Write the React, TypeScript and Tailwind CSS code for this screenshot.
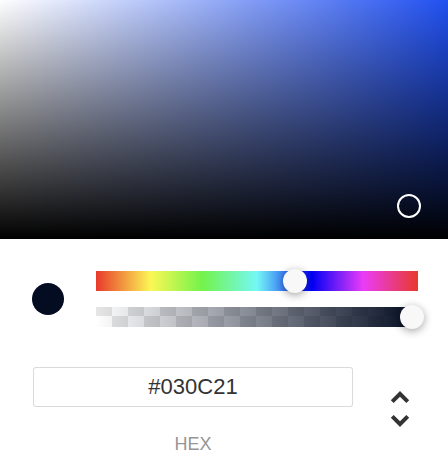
import React from 'react';

const HEX = '#030C21';

const ColorPicker: React.FC = () => {
  return (
    <div className="w-[448px] h-[476px] bg-white overflow-hidden font-['Liberation_Sans',Arial,sans-serif]">
      {/* Saturation / value area */}
      <div className="relative h-[239px] bg-[#2150f0] bg-[linear-gradient(to_top,#000,rgba(0,0,0,0)),linear-gradient(to_right,#fff,rgba(255,255,255,0))]">
        <div className="absolute left-[397px] top-[194px] w-[24px] h-[24px] rounded-full border-2 border-white" />
      </div>

      {/* Body */}
      <div className="pt-[32px] pl-[32px] pr-[30px]">
        <div className="flex items-center gap-[32px]">
          <div className="w-[32px] h-[32px] rounded-full bg-[#030c21]" />
          <div className="flex-1 flex flex-col gap-[16px]">
            <div className="relative h-[20px] bg-[linear-gradient(to_right,#e8392b_0%,#fbf755_17%,#73f34b_33%,#74f8f5_50%,#0000f5_67%,#ea3cf7_83%,#e8392b_100%)]">
              <div className="absolute left-[186.5px] top-[-2px] w-[24px] h-[24px] rounded-full bg-[#f8f8f8] shadow-[0_2px_8px_rgba(0,0,0,0.37)]" />
            </div>
            <div className="relative h-[20px] bg-[repeating-conic-gradient(#fff_0_25%,#e6e6e6_0_50%)] bg-[length:32px_32px] bg-[position:0_-7px]">
              <div className="absolute inset-0 bg-[linear-gradient(to_right,rgba(3,12,33,0),rgb(3,12,33))]" />
              <div className="absolute left-[304px] top-[-2px] w-[24px] h-[24px] rounded-full bg-[#f8f8f8] shadow-[0_2px_8px_rgba(0,0,0,0.37)]" />
            </div>
          </div>
        </div>

        {/* Fields */}
        <div className="mt-[40px] flex items-start pl-px">
          <div className="w-[320px] flex flex-col items-center">
            <input
              readOnly
              value={HEX}
              className="w-[320px] h-[40px] rounded-[3px] shadow-[inset_0_0_0_1px_#dadada] text-center text-[22px] text-[#333] outline-none"
            />
            <div className="mt-[28px] text-[18px] leading-[18px] text-[#969696] uppercase">hex</div>
          </div>
          <div className="ml-[23px] mt-[18px]">
            <svg width="48" height="48" viewBox="0 0 24 24" fill="#333">
              <path d="M12,5.83L15.17,9L16.58,7.59L12,3L7.41,7.59L8.83,9L12,5.83Z" />
              <path d="M12,18.17L8.83,15L7.42,16.41L12,21L16.59,16.41L15.17,15L12,18.17Z" />
            </svg>
          </div>
        </div>
      </div>
    </div>
  );
};

export default function App() {
  return <ColorPicker />;
}
